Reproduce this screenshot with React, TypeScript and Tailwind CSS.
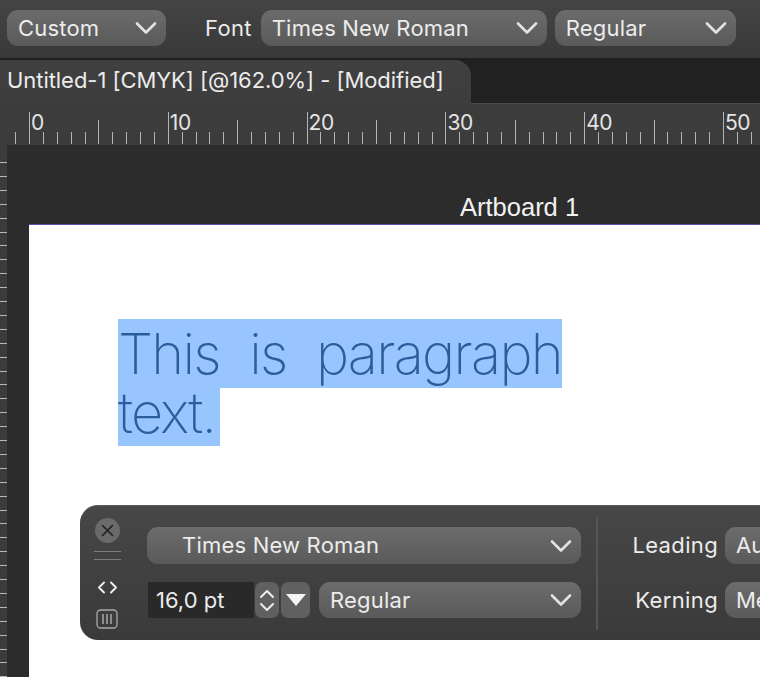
import React from "react";

const ui = "font-['Inter',sans-serif] font-normal";

function Chevron({ className = "" }: { className?: string }) {
  return (
    <svg width="22" height="14" viewBox="0 0 22 14" className={className} fill="none">
      <path d="M2 2.5 L11 11.5 L20 2.5" stroke="#e2e2e2" strokeWidth="2.6" strokeLinecap="round" strokeLinejoin="round" />
    </svg>
  );
}

function Dropdown({ label, className, textClass = "pl-[11px]", chevronClass = "mr-[9px]" }: { label: string; className: string; textClass?: string; chevronClass?: string }) {
  return (
    <div className={`flex items-center justify-between rounded-[11px] bg-gradient-to-b from-[#6c6c6c] to-[#5a5a5a] text-[#ececec] ${ui} text-[22px] tracking-[0.2px] ${className}`}>
      <span className={`whitespace-nowrap ${textClass}`}>{label}</span>
      <Chevron className={chevronClass} />
    </div>
  );
}

function TopRuler() {
  const unit = 13.88;
  const origin = 29;
  const ticks = [];
  for (let i = -1; i <= 52; i++) {
    const x = Math.round(origin + i * unit) + 0.5;
    const major = i % 10 === 0;
    const mid = !major && i % 5 === 0;
    const top = major ? 8 : mid ? 16 : 28;
    ticks.push(<line key={i} x1={x} x2={x} y1={top} y2={40} stroke="#b4b4b4" strokeWidth="1" />);
  }
  return (
    <svg width="760" height="41" className="block">
      {ticks}
      {[0, 10, 20, 30, 40, 50].map((n) => (
        <text key={n} x={origin + n * unit + 2} y={26} fill="#e4e4e4" fontSize="21" fontFamily="Inter, sans-serif" letterSpacing="-0.4">
          {n}
        </text>
      ))}
    </svg>
  );
}

function LeftRuler() {
  const ys = [];
  for (let i = 0; i < 38; i++) ys.push(162 - 145 + i * 13.9);
  return (
    <svg width="7" height="532" className="block shrink-0">
      {ys.map((y, i) => (
        <line key={i} x1={0} x2={7} y1={Math.round(y) + 0.5} y2={Math.round(y) + 0.5} stroke="#b8b8b8" strokeWidth="1" />
      ))}
    </svg>
  );
}

function LeftTools() {
  return (
    <div className="flex w-[67px] shrink-0 flex-col items-center pr-[13px] pt-[12px]">
      <div className="flex h-[25px] w-[25px] items-center justify-center rounded-full bg-[#6a6a6a]">
        <svg width="13" height="13" viewBox="0 0 13 13" fill="none">
          <path d="M1.5 1.5 L11.5 11.5 M11.5 1.5 L1.5 11.5" stroke="#1f1f1f" strokeWidth="1.6" strokeLinecap="round" />
        </svg>
      </div>
      <div className="mt-[8px] h-px w-[27px] bg-[#7c7c7c]" />
      <div className="mt-[7px] h-px w-[27px] bg-[#7c7c7c]" />
      <svg width="21" height="13" viewBox="0 0 21 13" fill="none" className="mt-[21px]">
        <path d="M7 1.5 L2 6.5 L7 11.5 M14 1.5 L19 6.5 L14 11.5" stroke="#f0f0f0" strokeWidth="1.9" strokeLinecap="round" strokeLinejoin="round" />
      </svg>
      <svg width="22" height="20" viewBox="0 0 22 20" fill="none" className="mt-[15px]">
        <rect x="1" y="1" width="20" height="18" rx="3.5" stroke="#a8a8a8" strokeWidth="1.3" />
        <path d="M7 5 V15 M11 5 V15 M15 5 V15" stroke="#b8b8b8" strokeWidth="1.3" />
      </svg>
    </div>
  );
}

function FormatPanel() {
  return (
    <div className="ml-[51px] flex h-[135px] w-[800px] rounded-l-[18px] bg-gradient-to-b from-[#474747] to-[#3a3a3a] border-t border-[#5c5c5c]">
      <LeftTools />
      <div className="flex w-[435px] shrink-0 flex-col pt-[21px]">
        <Dropdown label="Times New Roman" className="h-[37px] w-[434px]" textClass="pl-[35px]" chevronClass="mr-[9px]" />
        <div className="mt-[18px] flex h-[36px] items-stretch">
          <div className={`ml-[1px] flex w-[106px] items-center bg-[#292929] pl-[8px] text-[22px] text-[#ececec] ${ui}`}>16,0 pt</div>
          <div className="ml-[1px] flex w-[24px] items-center justify-center rounded-[7px] bg-[#606060]">
            <svg width="16" height="25" viewBox="0 0 16 25" fill="none">
              <path d="M2 9 L8 3 L14 9 M2 16 L8 22 L14 16" stroke="#ececec" strokeWidth="2" strokeLinecap="round" strokeLinejoin="round" />
            </svg>
          </div>
          <div className="ml-[2px] flex w-[29px] items-center justify-center rounded-[7px] bg-[#606060]">
            <svg width="20" height="12" viewBox="0 0 20 12">
              <path d="M0 0 H20 L10 12 Z" fill="#f4f4f4" />
            </svg>
          </div>
          <Dropdown label="Regular" className="ml-[9px] w-[262px]" chevronClass="mr-[9px]" />
        </div>
      </div>
      <div className="ml-[14px] mt-[11px] h-[113px] w-[2px] shrink-0 bg-[#555555]" />
      <div className="ml-[34px] flex flex-col pt-[21px]">
        <div className="flex h-[37px] items-center">
          <span className={`w-[86px] whitespace-nowrap text-right text-[22px] tracking-[0.35px] text-[#ececec] ${ui}`}>Leading</span>
          <div className={`ml-[7px] flex h-[37px] w-[120px] items-center rounded-[11px] bg-gradient-to-b from-[#6c6c6c] to-[#5a5a5a] pl-[11px] text-[22px] text-[#ececec] ${ui}`}>Auto</div>
        </div>
        <div className="mt-[18px] flex h-[36px] items-center">
          <span className={`w-[86px] whitespace-nowrap text-right text-[22px] tracking-[0.35px] text-[#ececec] ${ui}`}>Kerning</span>
          <div className={`ml-[7px] flex h-[36px] w-[120px] items-center rounded-[11px] bg-gradient-to-b from-[#6c6c6c] to-[#5a5a5a] pl-[11px] text-[22px] text-[#ececec] ${ui}`}>Metrics</div>
        </div>
      </div>
    </div>
  );
}

export default function App() {
  return (
    <div className="flex h-[677px] w-[760px] flex-col overflow-hidden bg-[#2c2c2c]">
      {/* Context toolbar */}
      <div className="flex h-[58px] shrink-0 items-center bg-gradient-to-b from-[#444444] to-[#393939] pb-[2px] pl-[7px]">
        <Dropdown label="Custom" className="h-[36px] w-[159px]" />
        <span className={`ml-[39px] text-[22px] tracking-[0.3px] text-[#ececec] ${ui}`}>Font</span>
        <Dropdown label="Times New Roman" className="ml-[9px] h-[36px] w-[286px]" />
        <Dropdown label="Regular" className="ml-[8px] h-[36px] w-[181px]" />
      </div>
      <div className="h-[2px] shrink-0 bg-[#1f1f1f]" />

      {/* Document tab bar */}
      <div className="flex h-[44px] shrink-0 bg-[#212121]">
        <div className={`flex w-[471px] items-center rounded-tr-[16px] bg-gradient-to-b from-[#404040] to-[#3d3d3d] pb-[3px] pl-[7px] text-[22px] tracking-[-0.05px] text-[#ececec] ${ui} whitespace-nowrap`}>
          Untitled-1 [CMYK] [@162.0%] - [Modified]
        </div>
        <div className="flex-1 border-b border-[#4a4a4a]" />
      </div>

      {/* Horizontal ruler */}
      <div className="h-[41px] shrink-0 bg-[#3c3c3c]">
        <TopRuler />
      </div>

      {/* Workspace */}
      <div className="flex flex-1 overflow-hidden">
        <div className="w-[7px] shrink-0 bg-[#3c3c3c]">
          <LeftRuler />
        </div>
        <div className="flex flex-1 flex-col overflow-hidden bg-[#2c2c2c] pl-[22px]">
          <div className="h-[79px] shrink-0 pl-[431px] pt-[47px]">
            <span className="block font-['Liberation_Sans',sans-serif] text-[25.5px] leading-[30px] text-[#f2f2f2] whitespace-nowrap">Artboard 1</span>
          </div>
          <div className="flex-1 border-t border-[#5a50a8] bg-white pl-[89px] pt-[94px]">
            <div className="font-['Inter',sans-serif] text-[56px] font-extralight leading-[58px] tracking-[-1.7px] text-[#2b5d9c]">
              <div className="flex h-[69px] w-[444px] items-center justify-between bg-[#99c5fe] pt-[1px]">
                <span>This</span>
                <span>is</span>
                <span>paragraph</span>
              </div>
              <div className="flex h-[58px] w-[102px] items-center bg-[#99c5fe] pb-[8px]">
                <span>text.</span>
              </div>
            </div>
            <div className="-ml-[89px] mt-[59px]">
              <FormatPanel />
            </div>
          </div>
        </div>
      </div>
    </div>
  );
}
